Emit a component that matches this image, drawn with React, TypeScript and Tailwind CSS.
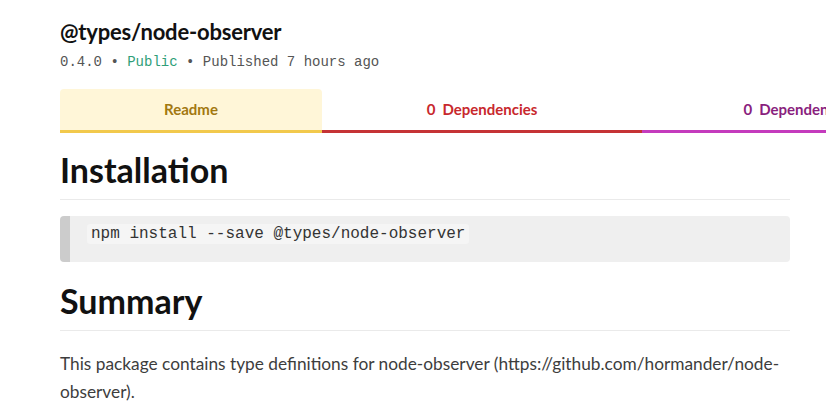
import React from "react";

// npm package page: header, tab strip and readme
const SANS = "font-['Lato','Noto_Sans',sans-serif]";
const MONO = "font-['Liberation_Mono','DejaVu_Sans_Mono',monospace]";

interface Tab {
  label: string;
  count?: number;
  width: string;
  tone: string;
}

const tabs: Tab[] = [
  { label: "Readme", width: "w-[262px]", tone: "bg-[#fff6d8] border-[#f2c94c] text-[#a27810] rounded-t-[4px]" },
  { label: "Dependencies", count: 0, width: "w-[320px]", tone: "border-[#c53335] text-[#c8282d]" },
  { label: "Dependents", count: 0, width: "w-[300px]", tone: "border-[#c43bbd] text-[#8a1f7e]" },
];

export default function App() {
  return (
    <div className={`w-[826px] h-[412px] overflow-hidden bg-white ${SANS}`}>
      <div className="pl-[60px] pt-[14px]">
        <h1 className="text-[22px] leading-[36px] font-bold tracking-[-0.2px] text-[#111]">@types/node-observer</h1>
        <div className={`${MONO} text-[14px] leading-[20px] mt-[2px] text-[#555]`}>
          0.4.0 • <span className="text-[#2f9e78]">Public</span> • Published 7 hours ago
        </div>

        <div className="flex w-max mt-[17px]">
          {tabs.map((t) => (
            <div
              key={t.label}
              className={`${t.width} h-[44px] flex items-center justify-center border-b-[3px] text-[15px] font-bold ${t.tone}`}
            >
              {t.count !== undefined && <span className="mr-[7px]">{t.count}</span>}
              {t.label}
            </div>
          ))}
        </div>

        <div className="w-[730px]">
          <h2 className="mt-[14px] pb-[6px] border-b border-[#eaeaea] text-[34px] leading-[46px] font-bold text-[#111]">
            Installation
          </h2>
          <div className="mt-[16px] h-[46px] rounded-[4px] bg-[#efefef] border-l-[10px] border-[#cccccc] pl-[17px] pt-[4px]">
            <code className={`${MONO} text-[16px] leading-[24px] text-[#333] bg-[#f5f5f5] px-[4px] py-[1px] rounded-[3px]`}>
              npm install --save @types/node-observer
            </code>
          </div>

          <h2 className="mt-[16px] pb-[6px] border-b border-[#eaeaea] text-[34px] leading-[46px] font-bold text-[#111]">
            Summary
          </h2>
          <p className="mt-[19px] text-[17.3px] leading-[28px] text-[#3d3d3d]">
            This package contains type definitions for node-observer (https://github.com/hormander/node-observer).
          </p>
        </div>
      </div>
    </div>
  );
}
